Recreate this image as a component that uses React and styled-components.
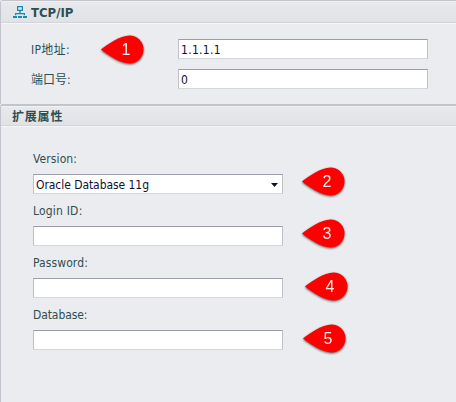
import React from "react";
import styled, { createGlobalStyle } from "styled-components";

const GlobalStyle = createGlobalStyle`
  * { box-sizing: border-box; }
  body {
    margin: 0;
    background: #ebecf0;
    overflow: hidden;
    font: 12px/14px "DejaVu Sans Condensed", "Noto Sans CJK SC", sans-serif;
    color: #2f4f4f;
  }
`;

const Page = styled.main`
  width: 456px;
  height: 402px;
  display: flex;
  flex-direction: column;
  background: #ebecf0;
`;

const Panel = styled.section`
  height: ${(p) => p.$height}px;
  flex: none;
  border-left: 1px solid #c3c3cd;
  border-top: ${(p) => p.$top}px solid #c3c4ca;
  border-top-left-radius: 3px;
`;

const Header = styled.header`
  display: flex;
  align-items: center;
  height: ${(p) => p.$height}px;
  padding-left: ${(p) => p.$indent}px;
  background: linear-gradient(#e8e9ed, #e1e2e6);
  border-top: 1px solid #f0f1f4;
  border-bottom: 1px solid #d3d4d9;
  box-shadow: 0 1px #f5f6f8;
`;

const Title = styled.h2`
  margin: ${(p) => p.$drop || 0}px 0 0;
  font-size: ${(p) => p.$size}px;
  line-height: 18px;
  font-weight: bold;
  white-space: nowrap;
  letter-spacing: ${(p) => p.$spacing || 0}px;
`;

const NetworkIcon = styled.svg`
  display: block;
  width: 14px;
  height: 12px;
  margin-right: 4px;
`;

const InlineFields = styled.div`
  display: flex;
  flex-direction: column;
  gap: 10px;
  padding: 16px 0 0 30px;
`;

const InlineField = styled.label`
  position: relative;
  display: grid;
  grid-template-columns: 147px 250px;
  height: 20px;
  line-height: 20px;
`;

const StackedFields = styled.div`
  display: flex;
  flex-direction: column;
  gap: 10px;
  padding: 26px 0 0 32px;
`;

const StackedField = styled.label`
  position: relative;
  display: flex;
  flex-direction: column;
  width: 250px;
  height: 42px;
`;

const InlineCaption = styled.span`
  padding-top: 1px;
  white-space: nowrap;
  letter-spacing: ${(p) => p.$spacing || 0}px;
`;

const StackedCaption = styled.span`
  height: 22px;
  line-height: 14px;
  white-space: nowrap;
  letter-spacing: ${(p) => p.$spacing || 0}px;
`;

const controlBox = `
  width: 250px;
  height: 20px;
  padding: 0 2px;
  background: #fff;
  border: 1px solid #c0c0ca;
  border-top-color: #9b9ca7;
  border-bottom-color: #d6d7dc;
  border-radius: 0;
  color: #101033;
`;

const Input = styled.input`
  ${controlBox}
  display: block;
  padding-top: 2px;
  font: 12px "DejaVu Sans Condensed", sans-serif;
  letter-spacing: 0.3px;
  outline: none;
`;

const Select = styled.div`
  ${controlBox}
  display: flex;
  align-items: center;
  justify-content: space-between;
  padding-top: 1px;
  padding-right: 4px;
  line-height: 18px;
  letter-spacing: -0.06px;
  white-space: nowrap;
`;

const Arrow = styled.svg`
  width: 7px;
  height: 4px;
`;

const Pin = styled.svg`
  position: absolute;
  left: ${(p) => p.$x}px;
  top: ${(p) => p.$y}px;
  width: 48px;
  height: 36px;
  filter: drop-shadow(0 1px 1px rgba(0, 0, 0, 0.6));
  pointer-events: none;
`;

const PinNumber = styled.text`
  fill: #ffe9e9;
  font: 16px "Liberation Sans", sans-serif;
  text-anchor: middle;
`;

function Marker({ number, x, y }) {
  return (
    <Pin $x={x} $y={y} viewBox="0 0 48 36">
      <path
        d="M1 16.5 C8 11 20 2.5 29.5 2.5 A14 14 0 0 1 29.5 30.5 C20 30.5 8 22 1 16.5Z"
        fill="#fe0000"
      />
      <PinNumber x="26" y="22">{number}</PinNumber>
    </Pin>
  );
}

const FIELDS = [
  { label: "Login ID:", spacing: 0.2, x: 268, y: 13 },
  { label: "Password:", spacing: 0.1, x: 271, y: 14 },
  { label: "Database:", spacing: -0.1, x: 269, y: 14 },
];

export default function App() {
  return (
    <>
      <GlobalStyle />
      <Page>
        <Panel $height={104} $top={1}>
          <Header $height={22} $indent={12}>
            <NetworkIcon viewBox="0 0 14 12" fill="#158caf">
              <path
                d="M4 0h6v5H7.7v2H12v2.2h-1.2V8.2H3.2v1H2V7h4.3V5H4Zm1.2 1.2v2.6h3.6V1.2Z"
                fillRule="evenodd"
              />
              <path d="M0 10h4v2H0zM5 10h4v2H5zM10 10h4v2h-4z" />
            </NetworkIcon>
            <Title $size={13} $drop={2}>TCP/IP</Title>
          </Header>
          <InlineFields>
            <InlineField>
              <InlineCaption $spacing={0.3}>IP地址:</InlineCaption>
              <Input defaultValue="1.1.1.1" />
              <Marker number={1} x={69} y={-6} />
            </InlineField>
            <InlineField>
              <InlineCaption>端口号:</InlineCaption>
              <Input defaultValue="0" />
            </InlineField>
          </InlineFields>
        </Panel>
        <Panel $height={298} $top={2}>
          <Header $height={20} $indent={11}>
            <Title $size={12} $drop={2} $spacing={0.8}>扩展属性</Title>
          </Header>
          <StackedFields>
            <StackedField>
              <StackedCaption $spacing={0.1}>Version:</StackedCaption>
              <Select>
                Oracle Database 11g
                <Arrow viewBox="0 0 7 4">
                  <path d="M0 0h7L3.5 4Z" fill="#101033" />
                </Arrow>
              </Select>
              <Marker number={2} x={268} y={13} />
            </StackedField>
            {FIELDS.map((f, i) => (
              <StackedField key={f.label}>
                <StackedCaption $spacing={f.spacing}>{f.label}</StackedCaption>
                <Input />
                <Marker number={i + 3} x={f.x} y={f.y} />
              </StackedField>
            ))}
          </StackedFields>
        </Panel>
      </Page>
    </>
  );
}
